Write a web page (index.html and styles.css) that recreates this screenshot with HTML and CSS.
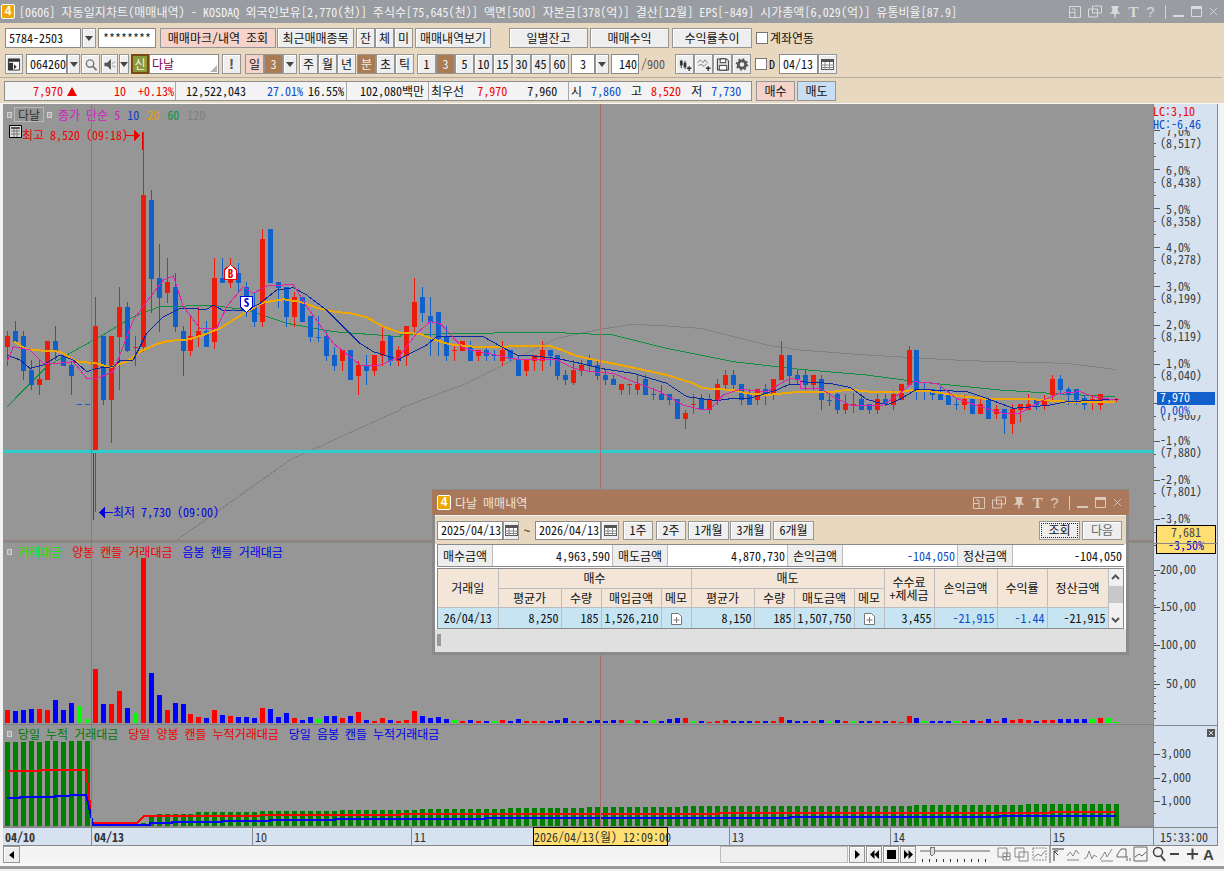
FILE: index.html
```html
<!DOCTYPE html>
<html lang="ko">
<head>
<meta charset="utf-8">
<title>자동일지차트(매매내역)</title>
<link rel="stylesheet" href="styles.css">
</head>
<body>
<svg class="sprite" aria-hidden="true">
  <symbol id="i-cal" viewBox="0 0 13 11"><rect x="0.5" y="0.5" width="12" height="10" fill="#fff" stroke="#555"/><rect x="0" y="0" width="13" height="3" fill="#555"/><path d="M0 6h13M0 8.5h13M4 3v8M8.500 3v8" stroke="#888" fill="none"/></symbol>
  <symbol id="i-win" viewBox="0 0 12 12"><path d="M.5.5h11v11H.5zM.5 6.500h5.500v5M3 3h3v3" fill="none" stroke="currentColor"/></symbol>
  <symbol id="i-cas" viewBox="0 0 14 12"><path d="M4.500.5h9v7h-9zM.5 3.500h9v8H.5z" fill="none" stroke="currentColor"/></symbol>
  <symbol id="i-pin" viewBox="0 0 12 13"><path d="M2 0h8v1.500L9 2v4l3 2.500H7l-.5 4.500h-1L5 8.500H0L3 6V2L2 1.500z" fill="currentColor"/></symbol>
  <symbol id="i-min" viewBox="0 0 11 11"><rect x="0" y="9" width="11" height="2" fill="currentColor"/></symbol>
  <symbol id="i-max" viewBox="0 0 11 11"><path d="M.5 1h10v9.500H.5z" fill="none" stroke="currentColor"/><rect y="0" width="11" height="3" fill="currentColor"/></symbol>
  <symbol id="i-x" viewBox="0 0 10 10"><path d="M1 1l8 8M9 1l-8 8" fill="none" stroke="currentColor"/></symbol>
  <symbol id="i-memo" viewBox="0 0 11 12"><path d="M.5.5h7l3 3v8H.5z" fill="#fff" stroke="#777"/><path d="M5.500 4v6M2.500 7h6" stroke="#777"/></symbol>
</svg>

<div class="app">
  <header class="titlebar">
    <span class="appicon">4</span>
    <span class="title-text">[0606] 자동일지차트(매매내역) - KOSDAQ 외국인보유[2,770(천)] 주식수[75,645(천)] 액면[500] 자본금[378(억)] 결산[12월] EPS[-849] 시가총액[6,029(억)] 유통비율[87.9]</span>
    <div class="wincontrols main-controls">
      <svg class="ic12"><use href="#i-win"/></svg>
      <svg class="ic14"><use href="#i-cas"/></svg>
      <svg class="ic12"><use href="#i-pin"/></svg>
      <span class="wt">T</span>
      <span class="wt wq">?</span>
      <span class="wsep"></span>
      <svg class="ic11"><use href="#i-min"/></svg>
      <svg class="ic11"><use href="#i-max"/></svg>
      <svg class="ic10"><use href="#i-x"/></svg>
    </div>
  </header>

  <section class="toolbar">
    <div class="row row1">
      <span class="field w76">5784-2503</span>
      <span class="btn dd w14 g1"></span>
      <span class="field w58 g2 center">********</span>
      <span class="btn pink w116 g4">매매마크/내역 조회</span>
      <span class="btn w77 g1">최근매매종목</span>
      <span class="btn w19 g2">잔</span><span class="btn w19">체</span><span class="btn w19">미</span>
      <span class="btn w76 g2">매매내역보기</span>
      <span class="btn w79 g18">일별잔고</span>
      <span class="btn w79 g2">매매수익</span>
      <span class="btn w80 g3">수익률추이</span>
      <span class="check g4"></span>
      <span class="lbl g2">계좌연동</span>
    </div>
    <div class="row row2">
      <span class="btn w18 iconbtn"><svg class="ic14" viewBox="0 0 14 14"><path d="M1 1h12v12H1z" fill="#fff" stroke="#333"/><path d="M1 1h12v3H1zM1 5h5v8H1z" fill="#333"/><path d="M7 7l3 2.500L7 12z" fill="#333"/></svg></span>
      <span class="field w41 g3">064260</span>
      <span class="btn dd w13"></span>
      <span class="btn w19 g1 iconbtn"><svg class="ic14" viewBox="0 0 14 14"><circle cx="6" cy="6" r="4" fill="none" stroke="#777" stroke-width="1.500"/><path d="M9 9l4 4" stroke="#777" stroke-width="2"/></svg></span>
      <span class="btn w17 g1 iconbtn"><svg class="ic14" viewBox="0 0 14 14"><path d="M1 5h3l4-4v12l-4-4H1z" fill="#555"/><path d="M10 5v1M12 4v1M10 8v1M12 9v1" stroke="#555"/></svg></span>
      <span class="btn dd w10 g1"></span>
      <span class="sin g2">신</span>
      <span class="field name w70">다날<i class="grip"></i></span>
      <span class="btn w19 g3 bang">!</span>
      <span class="btn pink w19 g4">일</span><span class="btn brown w19">3</span><span class="btn dd w14"></span>
      <span class="btn w19 g2">주</span><span class="btn w19">월</span><span class="btn w19">년</span>
      <span class="btn brown w19 g1">분</span><span class="btn w19">초</span><span class="btn w19">틱</span>
      <span class="btn w19 g3">1</span><span class="btn brown w19">3</span><span class="btn w19">5</span><span class="btn w19">10</span><span class="btn w19">15</span><span class="btn w19">30</span><span class="btn w19">45</span><span class="btn w19">60</span>
      <span class="field w24 g2 center">3</span><span class="btn dd w14"></span>
      <span class="field w28 g2 right">140</span>
      <span class="lbl gray w24 g2">/900</span>
      <span class="btn w19 g10 iconbtn"><svg class="ic14" viewBox="0 0 14 14"><path d="M3 2v9M7 3v9" stroke="#333"/><rect x="1.500" y="3" width="3" height="5" fill="#333"/><rect x="5.500" y="5" width="3" height="5" fill="#333"/><path d="M9 11h5M11.500 9v5" stroke="#333" stroke-width="1.500"/></svg></span><span class="btn w19 iconbtn"><svg class="ic14" viewBox="0 0 14 14"><path d="M0 5l3-3 3 3 2-3 3 3M1 8l3-1 3 2 3-3" stroke="#777" fill="none"/><path d="M9 11h5M11.500 9v5" stroke="#333" stroke-width="1.500"/></svg></span><span class="btn w19 iconbtn"><svg class="ic14" viewBox="0 0 14 14"><path d="M1 1h10l2 2v10H1z" fill="#ddd" stroke="#333"/><path d="M4 1h6v4H4zM3 8h8v5H3z" fill="#fff" stroke="#333"/></svg></span><span class="btn w19 iconbtn"><svg class="ic14" viewBox="0 0 14 14"><circle cx="7" cy="7" r="4" fill="none" stroke="#555" stroke-width="3"/><circle cx="7" cy="7" r="6" fill="none" stroke="#555" stroke-width="1.500" stroke-dasharray="2 2.700"/></svg></span>
      <span class="check g4"></span>
      <span class="lbl g2 w6">D</span>
      <span class="field w39 g4">04/13</span><span class="btn w19 iconbtn"><svg class="ic13"><use href="#i-cal"/></svg></span>
    </div>
    <div class="sep"></div>
    <div class="row row3">
      <div class="quote">
        <div class="qcell qc1">
          <span class="up qa">7,970</span><span class="tri"></span><span class="up qb">10</span><span class="up qc">+0.13%</span>
        </div>
        <div class="qcell qc2">
          <span class="qd">12,522,043</span><span class="dn qe">27.01%</span><span class="qf">16.55%</span>
        </div>
        <div class="qcell qc3"><span class="qg">102,080백만</span></div>
        <div class="qcell qc4">
          <span class="qh">최우선</span><span class="up qi">7,970</span><span class="qj">7,960</span>
        </div>
        <div class="qcell qc5">
          <span class="qk">시</span><span class="dn ql">7,860</span><span class="qm">고</span><span class="up ql2">8,520</span><span class="qn">저</span><span class="dn ql2">7,730</span>
        </div>
      </div>
      <span class="btn pink w39 g4 tall">매수</span>
      <span class="btn sky w39 g2 tall">매도</span>
    </div>
  </section>

  <main class="chart">
    <div class="plot">
      <div class="pane pane-price">
        <svg class="layer" id="svg-price" viewBox="3 104 1150 439" shape-rendering="crispEdges"></svg>
        <div class="legend legend-price">
          <i class="sq"></i><span class="namebox">다날</span><i class="sq"></i>
          <span class="l1">종가 단순 5</span><span class="l2">10</span><span class="l3">20</span><span class="l4">60</span><span class="l5">120</span>
        </div>
        <div class="tableicon"><svg class="ic13" viewBox="0 0 13 13"><path d="M.5.5h12v12H.5z" fill="#ddd" stroke="#000"/><path d="M2 2h9v2H2z" fill="#555"/><path d="M2 6h9M2 9h9M5 4v8M8 4v8" stroke="#777"/></svg></div>
        <div class="note note-hi">최고 8,520 (09:18)</div>
        <div class="note note-lo">최저 7,730 (09:00)</div>
      </div>
      <div class="pane pane-vol">
        <svg class="layer" id="svg-vol" viewBox="3 544 1150 182" shape-rendering="crispEdges"></svg>
        <div class="legend legend-sub">
          <i class="sq"></i><span class="c-lime">거래대금</span><span class="c-red">양봉 캔들 거래대금</span><span class="c-blue">음봉 캔들 거래대금</span>
        </div>
      </div>
      <div class="pane pane-cum">
        <svg class="layer" id="svg-cum" viewBox="3 726 1150 101" shape-rendering="crispEdges"></svg>
        <div class="legend legend-sub">
          <i class="sq"></i><span class="c-dgreen">당일 누적 거래대금</span><span class="c-red">당일 양봉 캔들 누적거래대금</span><span class="c-blue">당일 음봉 캔들 누적거래대금</span>
        </div>
      </div>
      <svg class="layer cross" id="svg-cross" viewBox="3 104 1150 723" shape-rendering="crispEdges"></svg>
    </div>
    <svg class="axis" id="svg-axis" viewBox="1153 104 65 723"></svg>
  </main>

  <div class="dates">
    <span class="dcell d1 bold">04/10</span>
    <span class="dcell d2 bold">04/13</span>
    <span class="dcell d3">10</span>
    <span class="dcell d4">11</span>
    <span class="dcell d5">13</span>
    <span class="dcell d6">14</span>
    <span class="dcell d7">15</span>
    <span class="dcell d8">15:33:00</span>
    <span class="datetip">2026/04/13(월) 12:09:00</span>
  </div>

  <div class="bottombar">
    <span class="btn sb"><i class="tl"></i></span>
    <span class="track"></span>
    <span class="thumb"></span>
    <span class="btn mb g1"><svg class="ic9" viewBox="0 0 9 9"><path d="M2 0l5 4.500L2 9z"/></svg></span>
    <span class="btn mb g1"><svg class="ic9" viewBox="0 0 9 9"><path d="M4.500 0v9L0 4.500zM9 0v9L4.500 4.500z"/></svg></span>
    <span class="btn mb g1"><svg class="ic9" viewBox="0 0 9 9"><path d="M0 0h9v9H0z"/></svg></span>
    <span class="btn mb g1"><svg class="ic9" viewBox="0 0 9 9"><path d="M0 0l4.500 4.500L0 9zM4.500 0L9 4.500 4.500 9z"/></svg></span>
    <svg class="slider g4" viewBox="0 0 70 17" shape-rendering="crispEdges"><rect x="0" y="4" width="70" height="2" fill="#aaa"/><path d="M10 1h4v7l-2 2-2-2z" fill="#ddd" stroke="#777"/><path d="M2 13v3M9 13v3M16 13v3M23 13v3M30 13v3M37 13v3M44 13v3M51 13v3M58 13v3M65 13v3" stroke="#333"/></svg>
    <svg class="tools" viewBox="0 0 218 17" fill="none" stroke="#888">
      <path d="M1 2h9v9H1zM6 7h7v7H6zM9.500 7v7M6 10.500h7"/>
      <path d="M18 2h9v9h-9zM22 6h9v9h-9z"/>
      <path d="M36 2h13v12H36z" stroke-dasharray="2 1"/><path d="M37 11l4-3 3 2 4-5"/>
      <path d="M53 0v17" stroke="#555"/>
      <path d="M55 3h12M57 15V5l4 4M57 5l4 0" stroke="#333"/>
      <path d="M70 10l3-4 3 4 3-6 3 4"/><path d="M70 14h12"/>
      <path d="M87 13l3-2 2-6 3 8 2-4 3 2"/>
      <path d="M103 14l5-8 2 5 5-8M104 15h12"/>
      <path d="M120 9l4-6h5v8h-9zM130 10v5M133 12v3" stroke="#666"/>
      <path d="M137 1h13v14h-13zM138 11l4-3 3 2 4-4" stroke="#666"/>
      <circle cx="161" cy="6" r="4.500" stroke="#444" stroke-width="1.500"/><path d="M164 10l4 5" stroke="#444" stroke-width="2"/>
      <path d="M173 8h9" stroke="#444" stroke-width="2"/>
      <path d="M190 8h11M195.500 2.500v11" stroke="#444" stroke-width="2"/>
      <text x="206" y="13.500" class="toolA">A</text>
    </svg>
  </div>
  <div class="footer-band"></div>

  <aside class="dialog">
    <header class="dlg-head">
      <span class="appicon dlg-icon">4</span>
      <span class="dlg-title">다날 매매내역</span>
      <div class="wincontrols dlg-controls">
        <svg class="ic12"><use href="#i-win"/></svg>
        <svg class="ic14"><use href="#i-cas"/></svg>
        <svg class="ic12"><use href="#i-pin"/></svg>
        <span class="wt">T</span>
        <span class="wt wq">?</span>
        <span class="wsep"></span>
        <svg class="ic11"><use href="#i-min"/></svg>
        <svg class="ic11"><use href="#i-max"/></svg>
        <svg class="ic10"><use href="#i-x"/></svg>
      </div>
    </header>
    <div class="dlg-tools">
      <span class="field w66">2025/04/13</span><span class="btn w16 iconbtn"><svg class="ic13"><use href="#i-cal"/></svg></span>
      <span class="tilde">~</span>
      <span class="field w66">2026/04/13</span><span class="btn w18 iconbtn"><svg class="ic13"><use href="#i-cal"/></svg></span>
      <span class="btn w30 g4">1주</span>
      <span class="btn w30 g3">2주</span>
      <span class="btn w41 g2">1개월</span>
      <span class="btn w41 g1">3개월</span>
      <span class="btn w41 g2">6개월</span>
      <span class="btn w41 active dlg-push">조회</span>
      <span class="btn w40 g2 muted">다음</span>
    </div>
    <div class="dlg-body">
      <div class="summary">
        <span class="slab s1">매수금액</span><span class="sval s2">4,963,590</span>
        <span class="slab s3">매도금액</span><span class="sval s4">4,870,730</span>
        <span class="slab s5">손익금액</span><span class="sval s6 dn">-104,050</span>
        <span class="slab s7">정산금액</span><span class="sval s8">-104,050</span>
      </div>
      <div class="tablewrap">
        <table class="trades">
          <colgroup>
            <col class="c60"><col class="c63"><col class="c40"><col class="c60"><col class="c30">
            <col class="c63"><col class="c40"><col class="c60"><col class="c30"><col class="c50">
            <col class="c63"><col class="c50"><col class="c61">
          </colgroup>
          <thead>
            <tr>
              <th rowspan="2">거래일</th><th colspan="4">매수</th><th colspan="4">매도</th>
              <th rowspan="2" class="two">수수료<br>+제세금</th><th rowspan="2">손익금액</th><th rowspan="2">수익률</th><th rowspan="2">정산금액</th>
            </tr>
            <tr>
              <th>평균가</th><th>수량</th><th>매입금액</th><th>메모</th>
              <th>평균가</th><th>수량</th><th>매도금액</th><th>메모</th>
            </tr>
          </thead>
          <tbody>
            <tr>
              <td class="ctr">26/04/13</td><td>8,250</td><td>185</td><td>1,526,210</td><td class="ctr"><svg class="ic11 memo"><use href="#i-memo"/></svg></td>
              <td>8,150</td><td>185</td><td>1,507,750</td><td class="ctr"><svg class="ic11 memo"><use href="#i-memo"/></svg></td>
              <td>3,455</td><td class="dn">-21,915</td><td class="dn">-1.44</td><td>-21,915</td>
            </tr>
          </tbody>
        </table>
        <div class="vscroll">
          <svg class="ic9 arrow" viewBox="0 0 9 9"><path d="M1 6l3.500-3.500L8 6" fill="none" stroke="#555" stroke-width="2"/></svg>
          <span class="vthumb"></span>
          <svg class="ic9 arrow arrow-b" viewBox="0 0 9 9"><path d="M1 3l3.500 3.500L8 3" fill="none" stroke="#555" stroke-width="2"/></svg>
        </div>
      </div>
    </div>
    <div class="dlg-foot"><i class="dots"></i></div>
  </aside>
</div>
<script src="chart.js"></script>
</body>
</html>
```
FILE: styles.css
```css
* { box-sizing: border-box; }
html, body { margin: 0; padding: 0; }
body {
  width: 1224px; height: 871px; overflow: hidden; background: #f2f2f2;
  font-family: "Noto Sans CJK KR", "Liberation Sans", sans-serif;
  font-size: 12px; line-height: 14px; color: #111;
  font-feature-settings: "hwid";
}
.sprite { position: absolute; width: 0; height: 0; }
.app { position: relative; width: 1224px; height: 871px; display: flex; flex-direction: column; }

.titlebar { height: 23px; background: #999ca1; color: #f2f2f2; display: flex; align-items: center; flex: none; }
.appicon {
  width: 14px; height: 15px; margin-left: 1px; background: #eea800; color: #fff; border: 1px solid #fff; border-radius: 2px;
  font: bold 12px/13px "Liberation Sans", sans-serif; text-align: center; flex: none;
}
.title-text { margin-left: 4px; white-space: nowrap; letter-spacing: .07px; }
.wincontrols { display: flex; align-items: center; color: #d8dadc; margin-left: auto; }
.main-controls { margin-right: 6px; }
.wincontrols > * { flex: none; }
.ic9 { width: 9px; height: 9px; }
.ic10 { width: 9px; height: 9px; }
.ic11 { width: 11px; height: 11px; }
.ic12 { width: 12px; height: 12px; }
.ic13 { width: 13px; height: 11px; }
.ic14 { width: 14px; height: 13px; }
.wincontrols .ic12, .wincontrols .ic14 { margin-right: 7px; }
.wincontrols .ic11 { margin-right: 7px; }
.wt { font: bold 15px/14px "Liberation Serif", serif; width: 11px; margin-right: 6px; text-align: center; }
.wq { font-family: "Liberation Sans", sans-serif; font-weight: normal; margin-right: 9px; }
.wsep { width: 1px; height: 14px; background: #d0d0d0; margin-right: 7px; }

.toolbar { height: 81px; background: #e8d8bf; flex: none; border-bottom: 1px solid #f8f8f8; padding-top: 5px; }
.row { display: flex; height: 20px; align-items: stretch; padding-left: 5px; }
.row2 { margin-top: 6px; }
.row3 { margin-top: 3px; padding-left: 4px; }
.sep { height: 1px; background: #b5aca0; margin-top: 3px; margin-right: 2px; }

.btn {
  display: flex; align-items: center; justify-content: center; flex: none; white-space: nowrap;
  background: #eeeeee; border: 1px solid #969696; box-shadow: inset 1px 1px 0 #fff; color: #111;
}
.iconbtn svg { display: block; }
.pink { background: #f5d2ca; box-shadow: none; }
.sky { background: #c8def2; box-shadow: none; }
.brown { background: #ab7c54; color: #eee; box-shadow: none; }
.muted { color: #666; }
.active { outline: 1px dotted #222; outline-offset: -3px; }
.dd::after { content: ""; border: 4px solid transparent; border-top: 5px solid #444; border-bottom: 0; }
.field {
  display: flex; align-items: center; flex: none; white-space: nowrap; background: #fff; border: 1px solid #8a8a8a; padding-left: 3px; color: #111;
}
.center { justify-content: center; padding-left: 0; }
.right { justify-content: flex-end; padding: 0 1px 0 0; }
.lbl { display: flex; align-items: center; flex: none; white-space: nowrap; }
.gray { color: #555; }
.check { width: 12px; height: 12px; align-self: center; background: #fff; border: 1px solid #777; flex: none; }
.sin { width: 18px; background: #8a9a3a; color: #f4f4e0; border: 2px solid #7a4a14; display: flex; align-items: center; justify-content: center; flex: none; }
.name { color: #7a0050; position: relative; padding-left: 2px; }
.grip { position: absolute; right: 1px; bottom: 1px; border-left: 7px solid transparent; border-bottom: 7px solid #b5b5b5; }
.bang { font: bold 15px/14px "Liberation Sans", sans-serif; color: #555; }

.w6 { width: 6px; } .w10 { width: 10px; } .w13 { width: 13px; } .w14 { width: 14px; } .w16 { width: 16px; } .w17 { width: 17px; }
.w18 { width: 18px; } .w19 { width: 19px; } .w24 { width: 24px; } .w28 { width: 28px; } .w30 { width: 30px; } .w39 { width: 39px; }
.w40 { width: 40px; } .w41 { width: 41px; } .w58 { width: 58px; } .w66 { width: 66px; } .w70 { width: 70px; } .w76 { width: 76px; }
.w77 { width: 77px; } .w79 { width: 79px; } .w80 { width: 80px; } .w116 { width: 116px; }
.g1 { margin-left: 1px; } .g2 { margin-left: 2px; } .g3 { margin-left: 3px; } .g4 { margin-left: 4px; } .g10 { margin-left: 10px; } .g18 { margin-left: 18px; }

.quote { width: 748px; display: flex; background: #f3f3f3; border: 1px solid #8e8e8e; flex: none; }
.qcell { display: flex; align-items: center; white-space: nowrap; flex: none; border-right: 1px solid #a8a8a8; height: 100%; }
.qcell:last-child { border-right: 0; }
.qc1 { width: 171px; } .qc2 { width: 171px; } .qc3 { width: 82px; } .qc4 { width: 140px; } .qc5 { width: 182px; }
.up { color: #f00000; } .dn { color: #0a4cc8; }
.qa { margin-left: 28px; } .tri { margin-left: 4px; border: 5px solid transparent; border-bottom: 9px solid #f00000; border-top: 0; }
.qb { margin-left: 37px; } .qc { margin-left: 12px; }
.qd { margin-left: 10px; } .qe { margin-left: 21px; } .qf { margin-left: 5px; }
.qg { margin-left: 13px; }
.qh { margin-left: 2px; } .qi { margin-left: 13px; } .qj { margin-left: 20px; }
.qk { margin-left: 2px; } .ql { margin-left: 9px; } .qm { margin-left: 10px; } .ql2 { margin-left: 9px; } .qn { margin-left: 10px; }
.tall { height: 20px; }

.chart { height: 723px; display: flex; flex: none; padding-left: 3px; }
.plot { position: relative; width: 1150px; height: 723px; background: #969696; border-left: 0; flex: none; display: flex; flex-direction: column; }
.pane { position: relative; flex: none; }
.pane-price { height: 439px; } .pane-vol { height: 182px; } .pane-cum { height: 102px; }
.layer { position: absolute; left: 0; top: 0; width: 100%; height: 100%; display: block; }
.cross { pointer-events: none; }
.axis { width: 65px; height: 723px; flex: none; background: #d6e2f0; display: block; }
.axis text { font-size: 12px; fill: #3c3c3c; }

.legend { position: relative; display: flex; align-items: center; white-space: nowrap; padding-left: 4px; }
.legend-price { height: 17px; margin-top: 2px; }
.sq { width: 5px; height: 6px; background: #aaa; border: 1px solid #d0d0d0; flex: none; }
.namebox { border: 1px solid #b8b8b8; color: #333; padding: 0 2px; height: 15px; line-height: 13px; margin: 0 3px 0 2px; width: 30px; text-align: center; }
.l1 { color: #d020c0; margin-left: 6px; } .l2 { color: #1040c0; margin-left: 7px; } .l3 { color: #e8a000; margin-left: 8px; }
.l4 { color: #109040; margin-left: 8px; } .l5 { color: #808080; margin-left: 8px; }
.legend-sub { height: 16px; margin-top: 1px; }
.legend-sub .sq { margin-right: 6px; }
.legend-sub span { margin-right: 10px; }
.c-lime { color: #00f000; } .c-red { color: #f00000; } .c-blue { color: #0000f0; } .c-dgreen { color: #007a00; }
.tableicon { position: absolute; left: 6px; top: 21px; line-height: 0; }
.tableicon .ic13 { height: 13px; }
.note { position: absolute; white-space: nowrap; }
.note-hi { left: 19px; top: 24px; color: #f00000; }
.note-lo { left: 110px; top: 401px; color: #0000e0; }

.dates { position: relative; height: 19px; display: flex; flex: none; padding-left: 3px; }
.dcell { background: #d6e2f0; border-top: 1px solid #888; border-bottom: 1px solid #888; border-left: 1px solid #888; padding-left: 2px; line-height: 17px; color: #333; flex: none; }
.d1 { width: 88px; border-left: 0; } .d2 { width: 161px; } .d3 { width: 159px; } .d4 { width: 318px; } .d5 { width: 161px; } .d6 { width: 160px; } .d7 { width: 103px; }
.d8 { width: 65px; padding-left: 6px; border-right: 1px solid #888; }
.bold { font-weight: 700; }
.datetip { position: absolute; left: 533px; top: 0; width: 135px; height: 19px; background: #ffdf72; border: 1px solid #000; text-align: center; line-height: 17px; color: #333; white-space: nowrap; }

.bottombar { height: 17px; display: flex; flex: none; padding-left: 3px; align-items: stretch; background: #f4f4f4; }
.sb { width: 17px; }
.tl { border: 4px solid transparent; border-right: 5px solid #000; border-left: 0; }
.track { width: 700px; flex: none; }
.thumb { width: 128px; background: #eeeeee; border: 1px solid #bbb; flex: none; }
.mb { width: 16px; }
.mb path { fill: #000; }
.slider { width: 70px; height: 17px; flex: none; display: block; }
.tools { width: 218px; height: 17px; margin-left: 7px; flex: none; display: block; }
.toolA { font: bold 15px "Liberation Sans", sans-serif; fill: #444; stroke: none; }
.footer-band { height: 3px; background: #f8f8f8; flex: none; border-bottom: 0; box-shadow: 0 3px 0 #999; }

.dialog {
  position: absolute; left: 432px; top: 489px; width: 697px; height: 166px;
  background: #f4f4f4; border: 1px solid #8a8a8a; border-width: 1px 3px 3px 3px; display: flex; flex-direction: column;
}
.dlg-head { height: 25px; background: #a9785b; margin: 0 -3px; padding-left: 3px; color: #f0e4dc; display: flex; align-items: center; flex: none; }
.dlg-icon { margin-left: 2px; }
.dlg-title { margin-left: 4px; }
.dlg-controls { color: #ddc9bb; margin-right: 7px; }
.dlg-tools { height: 28px; margin-top: 1px; background: #e8d8bf; display: flex; align-items: center; padding-left: 2px; flex: none; }
.dlg-tools .btn, .dlg-tools .field { height: 19px; }
.tilde { width: 16px; text-align: center; }
.dlg-push { margin-left: auto; }
.dlg-tools .g2.muted { margin-right: 4px; }
.dlg-body { padding: 0 2px 0 2px; background: #fff; flex: none; height: 85px; }
.summary { height: 23px; display: flex; border: 1px solid #8a8a8a; }
.slab { background: #eeeeee; display: flex; align-items: center; justify-content: center; flex: none; border-right: 1px solid #bbb; }
.sval { background: #fff; display: flex; align-items: center; justify-content: flex-end; padding-right: 2px; flex: none; border-right: 1px solid #bbb; }
.s1 { width: 55px; } .s2 { width: 120px; } .s3 { width: 55px; } .s4 { width: 120px; } .s5 { width: 55px; } .s6 { width: 115px; } .s7 { width: 55px; } .s8 { width: 111px; border-right: 0; }
.tablewrap { margin-top: 1px; height: 61px; display: flex; border: 1px solid #8a8a8a; background: #fff; }
.trades { border-collapse: collapse; table-layout: fixed; width: 670px; flex: none; height: 59px; }
.c60 { width: 60px; } .c63 { width: 63px; } .c40 { width: 40px; } .c30 { width: 30px; } .c50 { width: 50px; } .c61 { width: 61px; }
.trades th { background: #f3e5d8; border: 1px solid #bdbdbd; font-weight: 400; padding: 0; height: 19px; }
.trades th.two { line-height: 13px; }
.trades td { background: #c6e4f2; border: 1px solid #bdbdbd; text-align: right; padding: 0 2px 0 0; height: 21px; }
.trades td.ctr { text-align: center; padding: 0; }
.trades tr > :first-child { border-left: 0; }
.trades thead tr:first-child th { border-top: 0; }
.trades tbody td { border-bottom: 0; }
.memo { display: inline-block; vertical-align: -2px; height: 12px; }
.vscroll { flex: 1; background: #f0f0f0; position: relative; display: flex; flex-direction: column; align-items: center; }
.arrow { margin-top: 4px; flex: none; }
.vthumb { width: 100%; height: 17px; margin-top: 4px; background: #c8c8c8; flex: none; }
.arrow-b { margin-top: 12px; }
.dlg-foot { flex: 1; background: #e0e0e0; padding: 5px 0 0 2px; }
.dots { display: block; width: 4px; height: 12px; background-image: radial-gradient(#999 1px, transparent 1px); background-size: 2px 2px; }
```
FILE: chart.js
```js
(function () {
  var NS = 'http://www.w3.org/2000/svg';
  var RED = '#ee1a0a', BLUE = '#1060cc';
  function X(i) { return Math.round(7 + 7.978 * i); }
  function el(parent, name, attrs, text) {
    var e = document.createElementNS(NS, name);
    for (var k in attrs) e.setAttribute(k, attrs[k]);
    if (text !== undefined) e.textContent = text;
    parent.appendChild(e);
    return e;
  }
  function rect(p, x, y, w, h, fill) { el(p, 'rect', { x: x, y: y, width: w, height: Math.max(h, 1), fill: fill }); }

  /* candles read from three stretches of the chart: colour, high, body top, body bottom, low */
  var A = [
    'r632,648,680,738','b603,633,665,665','b633,648,752,780','b720,750,795,810','r720,778,795,825','r663,663,780,780',
    'b618,663,693,720','b700,705,738,738','b722,735,768,825','b853,853,853,853','b853,853,853,853','r530,618,990,1176',
    'b648,648,840,855','r648,648,840,970','r500,560,650,810','b545,560,692,695','r648,680,680,738','r35,225,680,695',
    'b210,240,477,578','b372,475,533,635','r413,485,518,550','b460,500,620,635','b618,633,692,768','r588,648,692,708',
    'r560,633,650,680','b603,633,680,680','r413,473,665,687','b413,473,488,488','r413,473,488,503','b430,458,488,518',
    'b487,500,575,590','b515,560,605,620','r327,357,605,620','b327,327,490,490','b485,485,503,565','b500,500,590,620',
    'r515,530,590,620','b530,530,605,605','b588,588,650,665','b588,650,650,665','b633,648,708,722','b680,705,738,752',
    'r690,690,722,752','b690,690,780,780','r722,735,768,825','b705,735,752,795','r705,705,752,768','r618,663,708,738',
    'b648,648,722,738','r678,690,722,738'
  ];
  var B = [
    'r138,138,228,258','r-6,66,140,155','b21,51,98,126','b51,108,126,228','b96,96,177,228','b138,168,228,243',
    'r198,210,210,243','r183,183,213,213','b183,198,243,243','r210,210,228,243','b198,210,228,243','b210,226,226,243',
    'r183,210,243,258','b210,210,238,243','b225,240,288,288','r240,240,273,288','r225,225,243,273','r183,210,243,273',
    'b210,210,228,258','b225,225,288,300','b270,285,300,315','r240,270,309,315','r240,255,273,288','b225,240,258,273',
    'b240,255,288,300','b270,285,300,315','b285,297,315,315','r312,312,330,345','r312,313,313,345','r285,312,330,345',
    'b285,297,345,345','b325,343,343,360','b315,343,360,360','b343,343,360,375','b358,358,417,417','r390,399,417,447',
    'r343,373,373,402','b343,358,390,390','r343,358,390,402','r297,312,360,375','r270,285,315,330','b270,285,315,330',
    'b312,312,360,375','b328,343,375,375','r328,328,360,375','b312,328,345,375','r297,297,345,360','r183,225,300,300',
    'b225,225,288,315','b270,285,300,315'
  ];
  var C = [
    'b120,135,165,180','r135,135,165,180','b135,147,210,240','b190,210,210,228','b190,192,240,252','r192,222,240,252',
    'r190,222,222,250','b192,207,240,240','b222,222,240,252','r192,207,240,252','b192,207,225,228','r180,192,225,240',
    'r162,162,210,210','r48,60,165,165','b60,60,180,210','b160,180,180,210','b177,177,195,210','b170,192,210,210',
    'b180,192,225,225','b205,222,222,240','r195,207,225,240','b207,207,252,252','r207,222,252,252','b207,207,267,267',
    'r225,237,252,267','b237,237,267,312','r222,237,282,312','r222,222,240,275','r192,222,240,240','b207,207,225,240',
    'r195,207,225,240','r135,147,195,210','b135,147,180,195','b170,177,195,225','b177,177,210,225','b195,205,225,240',
    'r195,207,207,240','r192,192,225,240','r205,207,207,215','r205,207,207,215'
  ];
  var candles = [];
  function addC(list, off) {
    list.forEach(function (s) {
      var v = s.slice(1).split(',').map(Number);
      candles.push({ c: s[0] === 'r' ? RED : BLUE, h: off + v[0] / 3, t: off + v[1] / 3, b: off + v[2] / 3, l: off + v[3] / 3 });
    });
  }
  addC(A, 120); addC(B, 280); addC(C, 330);

  function pts(list, dx, dy) {
    var out = [];
    for (var i = 0; i < list.length; i += 2) out.push((dx + list[i] / 3) + ',' + (dy + list[i + 1] / 3));
    return out;
  }
  function line(g, a, b, c, color, w, extra) {
    var p = (extra || []).concat(pts(a, 0, 120), pts(b, 400, 280), pts(c, 800, 330));
    el(g, 'polyline', { points: p.join(' '), fill: 'none', stroke: color, 'stroke-width': w });
  }

  var price = document.getElementById('svg-price');
  line(price,
    [870,1020,1200,870],
    [0,385,200,310,400,210,470,175,600,148,700,133,800,138,900,145,1100,195,1200,210],
    [0,60,200,75,500,92,800,100,945,118], '#808080', 1, ['177,540', '290,460']);
  line(price,
    [22,860,80,800,140,740,200,705,300,650,400,590,480,560,640,556,740,570,860,610,1000,635,1200,650],
    [0,165,200,160,450,157,640,165,800,205,1000,245,1200,268],
    [0,118,200,135,350,155,600,180,800,193,945,200], '#109040', 1);

  candles.forEach(function (d, i) {
    var x = X(i);
    rect(price, x, Math.round(d.h), 1, Math.round(d.l) - Math.round(d.h), d.c);
    rect(price, x - 2, Math.round(d.t), 5, Math.round(d.b) - Math.round(d.t), d.c);
  });

  line(price,
    [43,665,80,688,130,692,180,695,230,725,290,730,330,742,380,725,420,695,470,672,510,662,560,660,610,645,660,625,700,600,740,575,790,548,850,538,900,545,950,563,1000,575,1050,580,1100,592,1150,620,1200,638],
    [0,158,60,162,100,178,150,193,220,200,320,200,340,197,450,198,480,208,530,228,600,243,700,263,800,285,880,310,910,325,950,327,1000,330,1040,340,1100,345,1150,340,1200,335],
    [0,185,100,185,130,181,170,181,230,187,300,187,330,181,400,185,470,197,560,207,700,208,800,215,945,215], '#f0a800', 2);
  line(price,
    [22,705,60,720,90,745,130,735,180,705,220,720,260,755,290,745,340,740,360,722,400,720,440,640,490,590,540,565,620,568,640,555,670,572,700,570,740,572,780,550,830,510,880,503,920,525,980,570,1030,620,1080,670,1120,695,1200,720],
    [0,235,40,215,80,195,110,170,250,170,300,198,350,225,400,228,470,235,540,250,600,265,700,280,800,310,860,350,950,362,1000,355,1050,355,1130,330,1170,312,1200,312],
    [0,155,90,160,150,172,200,208,260,225,300,208,350,178,500,185,560,205,640,235,700,230,750,225,800,215,950,208], '#0a28a0', 1);
  line(price,
    [22,725,40,680,90,690,130,730,170,730,220,725,260,775,290,775,340,755,400,600,440,545,490,480,520,468,550,560,600,625,650,625,680,560,730,500,760,520,800,498,880,493,920,560,1000,670,1050,710,1080,735,1140,735,1200,710],
    [0,225,50,160,90,125,120,130,190,205,350,238,470,240,520,265,570,275,640,280,700,305,780,335,850,375,900,388,930,388,970,345,1020,328,1100,335,1170,295,1200,300],
    [0,175,60,175,100,200,150,225,250,225,300,190,340,155,410,160,470,205,540,230,610,250,660,250,720,215,780,190,840,185,880,200,945,210], '#e020b0', 1);

  /* cyan reference line, high/low arrows, buy and sell marks */
  rect(price, 3, 450, 1150, 3, '#2ecccc');
  rect(price, 125, 135, 11, 1, '#f00000');
  el(price, 'polygon', { points: '134,130 140,135.500 134,141', fill: '#f00000' });
  rect(price, 142, 132, 1, 18, '#f00000');
  rect(price, 93, 453, 1, 67, '#f00000');
  el(price, 'polygon', { points: '105,507 99,512.500 105,518', fill: '#0000e0' });
  rect(price, 104, 512, 9, 1, '#0000e0');
  el(price, 'polygon', { points: '230.500,264.500 236.500,270 236.500,279.500 224.500,279.500 224.500,270', fill: '#fff', stroke: '#f00000', 'stroke-width': 1 });
  el(price, 'text', { x: 230.5, y: 278, 'text-anchor': 'middle', 'font-size': 11, 'font-weight': 700, fill: '#f00000', 'shape-rendering': 'auto' }, 'B');
  el(price, 'polygon', { points: '240.500,296.500 252.500,296.500 252.500,307 246.500,312.500 240.500,307', fill: '#fff', stroke: '#0000e0', 'stroke-width': 1 });
  el(price, 'text', { x: 246.5, y: 307, 'text-anchor': 'middle', 'font-size': 11, 'font-weight': 700, fill: '#0000e0' }, 'S');
  rect(price, 3, 541, 1150, 2, '#888');

  /* traded value bars */
  var V = ('r13 b12 b13 b14 r14 r13 b23 b13 b20 g17 g4 r54 b19 r19 r32 b15 g10 r165 b50 b28 r13 b20 b19 r9 r6 b5 r13 b8 r7 b6 b6 b5 r15 b14 b6 b10 r5 b3 b6 g4 b7 b7 r5 b7 r11 b3 r2 r5 b3 r2 r3 r12 b7 ' +
    'b5 b6 b4 g3 r2 b3 r2 b2 g2 r3 b2 b4 r2 r2 r2 b2 b3 b5 r2 r2 b2 b3 b2 b3 r3 g2 r3 b2 g3 b2 b4 b5 r5 g2 b2 r1 r2 r3 b2 b2 b2 r2 b2 r2 r6 b3 b2 b2 r2 b3 g2 ' +
    'b3 r2 g2 b2 b2 r2 b2 r2 r1 r7 b5 g2 b2 b2 b2 g2 r2 b3 r2 b4 r2 b5 r3 r4 r3 b2 r3 r3 b4 b4 b4 b4 g4 r5 g5 g1').split(' ');
  var vol = document.getElementById('svg-vol');
  var VC = { r: '#ff0000', b: '#0000ff', g: '#00ff00' };
  V.forEach(function (s, i) {
    var h = Number(s.slice(1));
    rect(vol, X(i) - 2, 724 - h, 5, h, VC[s[0]]);
  });
  rect(vol, 3, 725, 1150, 1, '#808080');

  /* cumulative traded value */
  var cum = document.getElementById('svg-cum');
  var tops = [
    [0, 84], [1, 84], [2, 84], [3, 85], [4, 84], [5, 85], [6, 85], [7, 84], [8, 85], [9, 85], [10, 85],
    [11, 0], [12, 2], [13, 2], [14, 2], [15, 3], [16, 3], [17, 3], [18, 9], [19, 12], [20, 12], [24, 14], [32, 15], [42, 16], [52, 17], [63, 18], [73, 19], [85, 20], [114, 21], [128, 22], [150, 22]
  ];
  for (var i = 0; i < V.length; i++) {
    var h = 0;
    for (var k = 0; k < tops.length; k++) if (tops[k][0] <= i) h = tops[k][1];
    if (h) rect(cum, X(i) - 2, 826 - h, 5, h, '#008000');
  }
  el(cum, 'polyline', { points: '7,771 40,771 40,770 86,770 92,823 137,823 145,816 260,816 265,815 400,815 400,814 718,814 718,813 1050,813 1050,812 1116,812', fill: 'none', stroke: '#ff0000', 'stroke-width': 2 });
  el(cum, 'polyline', { points: '7,798 20,798 20,797 55,797 55,796 70,796 72,795 86,795 93,825 150,825 150,823 172,823 172,822 222,822 222,821 270,821 270,820 335,820 335,819 485,819 485,818 790,818 790,817 1000,817 1000,816 1116,816', fill: 'none', stroke: '#0000ff', 'stroke-width': 2 });
  rect(cum, 3, 826, 1150, 1, '#888');

  /* crosshair */
  var cross = document.getElementById('svg-cross');
  rect(cross, 91, 104, 1, 723, '#a86c6c');
  rect(cross, 600, 104, 1, 723, '#a86c6c');
  rect(cross, 3, 540, 1150, 1, '#a07878');

  /* right axis */
  var ax = document.getElementById('svg-axis');
  function tick(y, major) { el(ax, 'rect', { x: 1153, y: y, width: major ? 7 : 3, height: 1, fill: '#555' }); }
  function lab(x, y, t, fill) { el(ax, 'text', { x: x, y: y, fill: fill || '#3c3c3c', style: fill ? 'fill:' + fill : '' }, t); }
  var n;
  for (n = -3; n <= 7; n++) {
    var y0 = Math.round(402.5 - 38.9 * n);
    tick(y0, true);
    tick(y0 + 13, false);
    tick(y0 + 26, false);
  }
  [['7,0%', 136, '(8,517)', 148], ['6,0%', 175, '(8,438)', 187], ['5,0%', 214, '(8,358)', 226], ['4,0%', 252, '(8,278)', 264],
   ['3,0%', 291, '(8,199)', 303], ['2,0%', 329, '(8,119)', 341], ['1,0%', 368, '(8,040)', 380],
   ['-1,0%', 445, '(7,880)', 457], ['-2,0%', 484, '(7,801)', 496], ['-3,0%', 523, null, 0]].forEach(function (r) {
    lab(r[0][0] === '-' ? 1160 : 1166, r[1], r[0]);
    if (r[2]) lab(1160, r[3], r[2]);
  });
  lab(1160, 420, '(7,960)');
  el(ax, 'rect', { x: 1153, y: 104, width: 65, height: 26, fill: '#d6e2f0' });
  lab(1153, 116, 'LC:3,10', '#f00000');
  lab(1153, 129, 'HC:-6,46', '#0a4cc8');
  el(ax, 'rect', { x: 1157, y: 392, width: 58, height: 13, fill: '#1160cc' });
  lab(1160, 402, '7,970', '#ffffff');
  el(ax, 'rect', { x: 1160, y: 405, width: 50, height: 10, fill: '#d6e2f0' });
  lab(1160, 415, '0,00%', '#0a4cc8');
  el(ax, 'rect', { x: 1156.5, y: 525.5, width: 59, height: 28, fill: '#ffdf72', stroke: '#000' });
  el(ax, 'text', { x: 1186, y: 537, 'text-anchor': 'middle', style: 'fill:#444' }, '7,681');
  el(ax, 'text', { x: 1186, y: 550, 'text-anchor': 'middle', style: 'fill:#0000e0' }, '-3,50%');
  el(ax, 'rect', { x: 1153, y: 543, width: 65, height: 1, fill: '#888' });
  [['200,00', 569.5], ['150,00', 607], ['100,00', 645], ['50,00', 683.5]].forEach(function (r) {
    tick(Math.round(r[1]), true);
    lab(r[0].length > 5 ? 1160 : 1166, r[1] + 4, r[0]);
  });
  for (n = 575; n < 725; n += 7.55) tick(Math.round(n), false);
  el(ax, 'rect', { x: 1153, y: 725, width: 65, height: 1, fill: '#888' });
  el(ax, 'rect', { x: 1207, y: 729, width: 8, height: 8, fill: '#555' });
  el(ax, 'path', { d: 'M1209 731l4 4M1213 731l-4 4', stroke: '#ddd', fill: 'none' });
  [['3,000', 754], ['2,000', 778], ['1,000', 801]].forEach(function (r) {
    tick(r[1], true);
    tick(r[1] - 12, false);
    lab(1161, r[1] + 4, r[0]);
  });
  tick(813, false);
  el(ax, 'rect', { x: 1153, y: 104, width: 1, height: 723, fill: '#888' });
  el(ax, 'rect', { x: 1217, y: 104, width: 1, height: 723, fill: '#888' });
})();
```
